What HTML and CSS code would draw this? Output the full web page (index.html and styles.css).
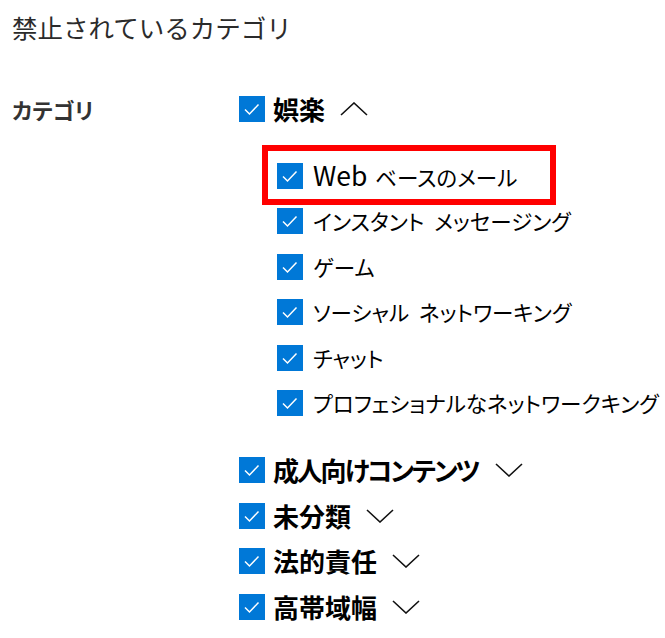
FILE: index.html
```html
<!DOCTYPE html>
<html lang="ja">
<head>
<meta charset="utf-8">
<title>禁止されているカテゴリ</title>
<link rel="stylesheet" href="styles.css">
</head>
<body>
<main class="page">
  <h1 class="title">禁止されているカテゴリ</h1>
  <section class="form">
    <div class="label">カテゴリ</div>
    <div class="groups">
      <div class="group">
        <div class="row head">
          <span class="cb"><svg viewBox="0 0 26 26" width="26" height="26"><rect width="26" height="26" fill="#0078d7"/><polyline points="6,13.5 10.5,18 19.5,8.5" fill="none" stroke="#fff" stroke-width="1.5"/></svg></span>
          <span class="name">娯楽</span>
          <svg class="chev" viewBox="0 0 28 14" width="28" height="14"><polyline points="1,13 14,1 27,13" fill="none" stroke="#111" stroke-width="1.6"/></svg>
        </div>
        <ul class="subs">
          <li class="row sub"><span class="hl"><span class="cb"><svg viewBox="0 0 26 26" width="26" height="26"><rect width="26" height="26" fill="#0078d7"/><polyline points="6,13.5 10.5,18 19.5,8.5" fill="none" stroke="#fff" stroke-width="1.5"/></svg></span><span class="name"><span class="latin">Web</span> ベースのメール</span></span></li>
          <li class="row sub"><span class="cb"><svg viewBox="0 0 26 26" width="26" height="26"><rect width="26" height="26" fill="#0078d7"/><polyline points="6,13.5 10.5,18 19.5,8.5" fill="none" stroke="#fff" stroke-width="1.5"/></svg></span><span class="name">インスタント メッセージング</span></li>
          <li class="row sub"><span class="cb"><svg viewBox="0 0 26 26" width="26" height="26"><rect width="26" height="26" fill="#0078d7"/><polyline points="6,13.5 10.5,18 19.5,8.5" fill="none" stroke="#fff" stroke-width="1.5"/></svg></span><span class="name">ゲーム</span></li>
          <li class="row sub"><span class="cb"><svg viewBox="0 0 26 26" width="26" height="26"><rect width="26" height="26" fill="#0078d7"/><polyline points="6,13.5 10.5,18 19.5,8.5" fill="none" stroke="#fff" stroke-width="1.5"/></svg></span><span class="name">ソーシャル ネットワーキング</span></li>
          <li class="row sub"><span class="cb"><svg viewBox="0 0 26 26" width="26" height="26"><rect width="26" height="26" fill="#0078d7"/><polyline points="6,13.5 10.5,18 19.5,8.5" fill="none" stroke="#fff" stroke-width="1.5"/></svg></span><span class="name">チャット</span></li>
          <li class="row sub"><span class="cb"><svg viewBox="0 0 26 26" width="26" height="26"><rect width="26" height="26" fill="#0078d7"/><polyline points="6,13.5 10.5,18 19.5,8.5" fill="none" stroke="#fff" stroke-width="1.5"/></svg></span><span class="name">プロフェショナルなネットワークキング</span></li>
        </ul>
      </div>
      <div class="row head">
        <span class="cb"><svg viewBox="0 0 26 26" width="26" height="26"><rect width="26" height="26" fill="#0078d7"/><polyline points="6,13.5 10.5,18 19.5,8.5" fill="none" stroke="#fff" stroke-width="1.5"/></svg></span>
        <span class="name tight">成人向けコンテンツ</span>
        <svg class="chev" viewBox="0 0 28 14" width="28" height="14"><polyline points="1,1 14,13 27,1" fill="none" stroke="#111" stroke-width="1.6"/></svg>
      </div>
      <div class="row head">
        <span class="cb"><svg viewBox="0 0 26 26" width="26" height="26"><rect width="26" height="26" fill="#0078d7"/><polyline points="6,13.5 10.5,18 19.5,8.5" fill="none" stroke="#fff" stroke-width="1.5"/></svg></span>
        <span class="name">未分類</span>
        <svg class="chev" viewBox="0 0 28 14" width="28" height="14"><polyline points="1,1 14,13 27,1" fill="none" stroke="#111" stroke-width="1.6"/></svg>
      </div>
      <div class="row head">
        <span class="cb"><svg viewBox="0 0 26 26" width="26" height="26"><rect width="26" height="26" fill="#0078d7"/><polyline points="6,13.5 10.5,18 19.5,8.5" fill="none" stroke="#fff" stroke-width="1.5"/></svg></span>
        <span class="name">法的責任</span>
        <svg class="chev" viewBox="0 0 28 14" width="28" height="14"><polyline points="1,1 14,13 27,1" fill="none" stroke="#111" stroke-width="1.6"/></svg>
      </div>
      <div class="row head">
        <span class="cb"><svg viewBox="0 0 26 26" width="26" height="26"><rect width="26" height="26" fill="#0078d7"/><polyline points="6,13.5 10.5,18 19.5,8.5" fill="none" stroke="#fff" stroke-width="1.5"/></svg></span>
        <span class="name">高帯域幅</span>
        <svg class="chev" viewBox="0 0 28 14" width="28" height="14"><polyline points="1,1 14,13 27,1" fill="none" stroke="#111" stroke-width="1.6"/></svg>
      </div>
    </div>
  </section>
</main>
</body>
</html>
```

FILE: styles.css
```css
html, body {
  margin: 0;
  background: #fff;
}
body {
  font-family: "Noto Sans CJK JP", "Noto Sans", sans-serif;
  color: #000;
}
.page {
  padding: 12px 0 0 12px;
}
.title {
  margin: 0;
  height: 30px;
  line-height: 30px;
  font-size: 25.5px;
  font-weight: 400;
  color: #2b2b2b;
}
.form {
  display: grid;
  grid-template-columns: 227px 1fr;
  margin-top: 44px;
}
.label {
  height: 45.4px;
  display: flex;
  align-items: center;
  font-size: 22px;
  font-weight: 700;
  color: #333;
  font-feature-settings: "palt";
}
.row {
  display: flex;
  align-items: center;
  height: 45.4px;
}
.cb {
  flex: none;
  width: 26px;
  height: 26px;
}
.cb svg {
  display: block;
}
.head .name {
  margin-left: 8px;
  font-size: 26px;
  font-weight: 700;
  line-height: 30px;
  font-feature-settings: "palt";
  white-space: nowrap;
}
.head .tight {
  letter-spacing: -2.2px;
}
.chev {
  margin-left: 15px;
  flex: none;
}
.tight + .chev {
  margin-left: 17px;
}
.subs {
  list-style: none;
  margin: 22px 0 22px 38px;
  padding: 0;
}
.sub .name {
  margin-left: 10px;
  font-size: 21.5px;
  line-height: 30px;
  font-feature-settings: "palt";
  word-spacing: 5px;
  white-space: nowrap;
}
.sub .latin {
  font-size: 26.5px;
}
.hl .name {
  word-spacing: 3px;
}
.hl {
  display: inline-flex;
  align-items: center;
  border: 6px solid #ff0000;
  padding: 9px 33px 7px 9px;
  margin: -15px -39px -13px -15px;
}
```
